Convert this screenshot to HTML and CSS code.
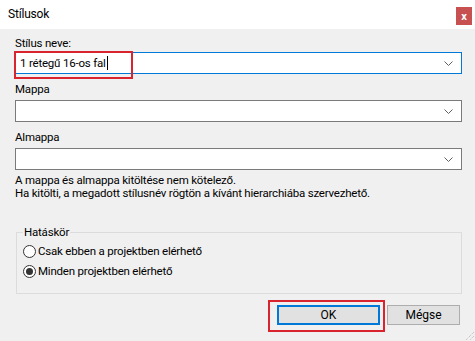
FILE: index.html
```html
<!DOCTYPE html>
<html lang="hu">
<head>
    <meta charset="UTF-8">
    <meta name="viewport" content="width=device-width, initial-scale=1.0">
    <title>Stílusok</title>
    <link rel="stylesheet" href="styles.css">
</head>
<body>
    <div class="window">
        <div class="titlebar">
            <span class="title">Stílusok</span>
            <span class="close">x</span>
        </div>
        <div class="content">
            <div class="label first">Stílus neve:</div>
            <div class="combo-wrap">
                <div class="combo focused">
                    <span class="value">1 rétegű 16-os fal</span><span class="caret"></span>
                    <svg class="chevron" width="9" height="5" viewBox="0 0 9 5"><path d="M0.5 0.5 L4.5 4.5 L8.5 0.5" fill="none" stroke="#606060" stroke-width="1"/></svg>
                </div>
                <div class="mark mark-name"></div>
            </div>

            <div class="label">Mappa</div>
            <div class="combo">
                <span class="value"></span>
                <svg class="chevron" width="9" height="5" viewBox="0 0 9 5"><path d="M0.5 0.5 L4.5 4.5 L8.5 0.5" fill="none" stroke="#606060" stroke-width="1"/></svg>
            </div>

            <div class="label">Almappa</div>
            <div class="combo">
                <span class="value"></span>
                <svg class="chevron" width="9" height="5" viewBox="0 0 9 5"><path d="M0.5 0.5 L4.5 4.5 L8.5 0.5" fill="none" stroke="#606060" stroke-width="1"/></svg>
            </div>

            <p class="note">A mappa és almappa kitöltése nem kötelező.<br>Ha kitölti, a megadott stílusnév rögtön a kívánt hierarchiába szervezhető.</p>

            <fieldset class="scope">
                <legend>Hatáskör</legend>
                <div class="radio-row"><span class="radio"></span>Csak ebben a projektben elérhető</div>
                <div class="radio-row"><span class="radio checked"></span>Minden projektben elérhető</div>
            </fieldset>

            <div class="buttons">
                <div class="btn-wrap">
                    <button class="btn default">OK</button>
                    <div class="mark mark-ok"></div>
                </div>
                <button class="btn">Mégse</button>
            </div>
        </div>
        <svg class="grip" width="12" height="12" viewBox="0 0 12 12">
            <path d="M11 3 L3 11 M11 7 L7 11" stroke="#b8b8b8" stroke-width="1" stroke-dasharray="1 1"/>
        </svg>
    </div>
</body>
</html>
```

FILE: styles.css
```css
*{
    margin: 0px;
    padding: 0px;
    box-sizing: border-box;
}
body{
    font-family: Roboto, "Noto Sans", sans-serif;
    font-size: 11.5px;
    letter-spacing: -0.2px;
    color: #000;
    background: #f0f0f0;
}
.window{
    position: relative;
    width: 475px;
    height: 341px;
    background: #f0f0f0;
    overflow: hidden;
}
.titlebar{
    height: 29px;
    background: #fff;
    display: flex;
    align-items: center;
    justify-content: space-between;
    padding: 0px 3px 0px 8px;
}
.title{
    font-size: 12px;
    line-height: 15px;
}
.close{
    width: 16px;
    height: 18px;
    background: #c75050;
    color: #fff;
    font-weight: bold;
    font-size: 11px;
    display: flex;
    align-items: center;
    justify-content: center;
    margin-top: 3px;
}
.content{
    padding: 7px 13px 0px 15px;
}
.label{
    line-height: 15px;
    margin-top: 8px;
    margin-bottom: 3px;
}
.label.first{
    margin-top: 0px;
    margin-bottom: 1px;
}
.combo-wrap{
    position: relative;
}
.combo{
    height: 22px;
    background: #fff;
    border: 1px solid #7a7a7a;
    display: flex;
    align-items: center;
    padding: 0px 8px 0px 4px;
}
.combo.focused{
    border-color: #0078d7;
}
.combo .value{
    flex: none;
    line-height: 15px;
}
.caret{
    width: 1px;
    height: 14px;
    background: #000;
    margin-left: 1px;
}
.chevron{
    margin-left: auto;
}
.mark{
    position: absolute;
    border: 2px solid #d9232e;
}
.mark-name{
    left: -1px;
    top: -1px;
    width: 119px;
    height: 28px;
}
.note{
    line-height: 13px;
    margin-top: 4px;
}
.scope{
    margin: 25px 0px 0px 1px;
    border: 1px solid #dcdcdc;
    padding: 1px 6px 12px 6px;
}
.scope legend{
    line-height: 15px;
    padding: 0px 1px;
}
.radio-row{
    display: flex;
    align-items: center;
    height: 20px;
}
.radio{
    width: 13px;
    height: 13px;
    border: 1px solid #333;
    border-radius: 50%;
    background: #fff;
    margin-right: 2px;
    display: flex;
    align-items: center;
    justify-content: center;
}
.radio.checked::after{
    content: "";
    width: 7px;
    height: 7px;
    border-radius: 50%;
    background: #333;
}
.buttons{
    display: flex;
    justify-content: flex-end;
    gap: 7px;
    margin-top: 11px;
    padding-right: 2px;
}
.btn-wrap{
    position: relative;
}
.btn{
    display: block;
    width: 73px;
    height: 20px;
    background: #e1e1e1;
    border: 1px solid #adadad;
    font-family: Roboto, "Noto Sans", sans-serif;
    font-size: 12px;
    color: #000;
}
.btn.default{
    width: 103px;
    border: 2px solid #0078d7;
}
.mark-ok{
    left: -9px;
    top: -5px;
    width: 117px;
    height: 32px;
}
.grip{
    position: absolute;
    right: 0px;
    bottom: 0px;
}
```
